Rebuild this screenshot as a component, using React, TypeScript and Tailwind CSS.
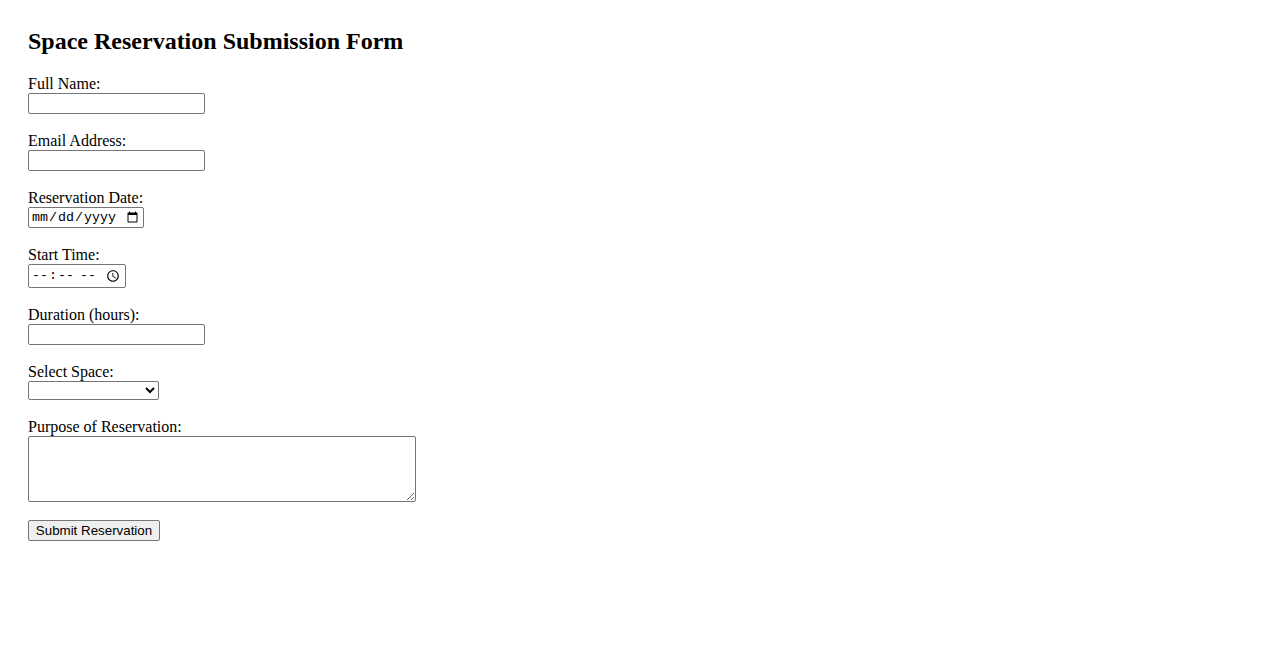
import React from "react";

const labelCls = "block h-[17px] leading-[15px] text-[16px] text-black";
const textInput =
  "block h-[21px] w-[177px] border border-[#767676] rounded-[2px] px-[2px] py-[1px] bg-white font-['Liberation_Sans',Arial,sans-serif] text-[13.33px]";

export default function App() {
  return (
    <div className="min-h-[650px] bg-white px-[28px] pt-[28px] font-['Liberation_Serif','Times_New_Roman',serif] text-black">
      <h2 className="text-[24px] font-bold leading-[26px] mb-[22px]">
        Space Reservation Submission Form
      </h2>
      <form onSubmit={(e) => e.preventDefault()}>
        <div className="mb-[19px]">
          <label className={labelCls} htmlFor="name">Full Name:</label>
          <input id="name" type="text" className={textInput} />
        </div>
        <div className="mb-[19px]">
          <label className={labelCls} htmlFor="email">Email Address:</label>
          <input id="email" type="email" className={textInput} />
        </div>
        <div className="mb-[19px]">
          <label className={labelCls} htmlFor="date">Reservation Date:</label>
          <input
            id="date"
            type="date"
            className="block h-[21px] w-[116px] border border-[#767676] rounded-[2px] px-[2px] py-[1px] bg-white font-['Liberation_Mono','Courier_New',monospace] text-[13.33px]"
          />
        </div>
        <div className="mb-[19px]">
          <label className={labelCls} htmlFor="time">Start Time:</label>
          <input
            id="time"
            type="time"
            className="block h-[24px] w-[98px] border border-[#767676] rounded-[2px] px-[2px] py-[1px] bg-white font-['Liberation_Mono','Courier_New',monospace] text-[13.33px]"
          />
        </div>
        <div className="mb-[19px]">
          <label className={labelCls} htmlFor="duration">Duration (hours):</label>
          <input id="duration" type="number" className={textInput} />
        </div>
        <div className="mb-[19px]">
          <label className={labelCls} htmlFor="space">Select Space:</label>
          <select
            id="space"
            className="block h-[19px] w-[131px] border border-[#767676] rounded-[2px] bg-white font-['Liberation_Sans',Arial,sans-serif] text-[13.33px]"
          >
            <option value=""></option>
          </select>
        </div>
        <div className="mb-[18px]">
          <label className={labelCls} htmlFor="purpose">Purpose of Reservation:</label>
          <textarea
            id="purpose"
            className="block h-[66px] w-[388px] border border-[#767676] rounded-[2px] px-[2px] py-[1px] bg-white font-['Liberation_Mono',monospace] text-[13.33px]"
          />
        </div>
        <button
          type="submit"
          className="block h-[21px] w-[132px] border border-[#767676] rounded-[2px] bg-[#efefef] px-[6px] font-['Liberation_Sans',Arial,sans-serif] text-[13.33px] leading-[19px] text-black"
        >
          Submit Reservation
        </button>
      </form>
    </div>
  );
}
